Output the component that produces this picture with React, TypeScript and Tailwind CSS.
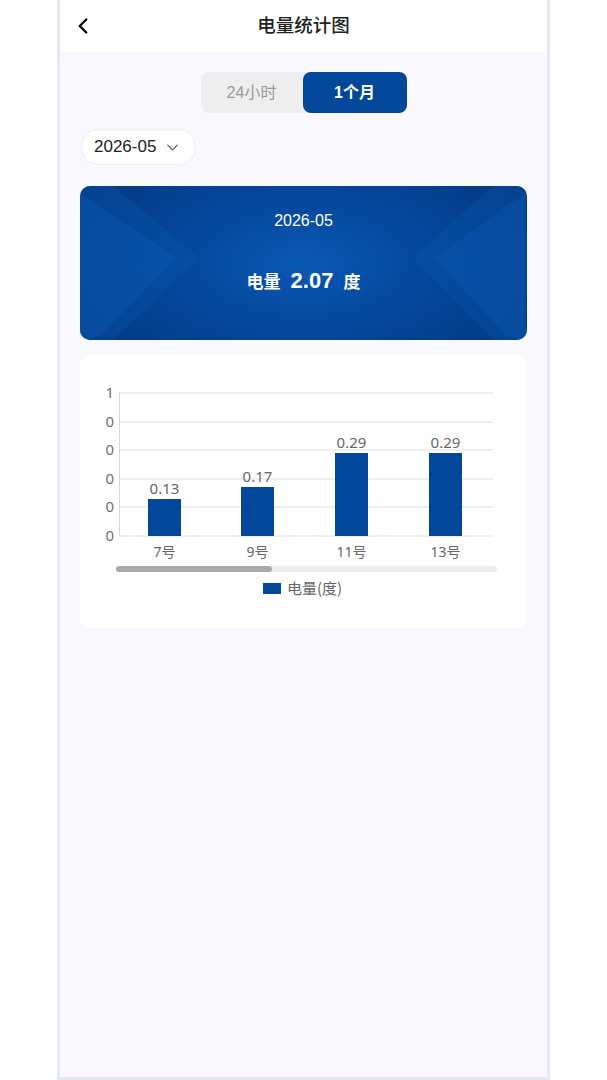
import { ChevronLeft, ChevronDown } from "lucide-react";

const bars = [
  { label: "7号", value: "0.13", x: 68, top: 144 },
  { label: "9号", value: "0.17", x: 161, top: 132 },
  { label: "11号", value: "0.29", x: 255, top: 98 },
  { label: "13号", value: "0.29", x: 349, top: 98 },
];

const grid = [38, 67, 95, 124, 152, 181];
const yLabels = ["1", "0", "0", "0", "0", "0"];

function Chart() {
  // coordinates relative to the card (card starts at x=80, y=355)
  return (
    <svg width="446" height="273" viewBox="0 0 446 273" className="block">
      {grid.map((y, i) => (
        <g key={i}>
          <line x1="39" x2="413" y1={y} y2={y} stroke="#e0e0e0" strokeWidth="1.2" />
          <text
            x="34"
            y={y + 5}
            textAnchor="end"
            fontSize="15"
            fill="#707070"
            fontFamily="'Noto Sans', 'Noto Sans CJK SC', sans-serif"
          >
            {yLabels[i]}
          </text>
        </g>
      ))}
      <line x1="39.5" x2="39.5" y1="38" y2="181" stroke="#d8d8d8" strokeWidth="1" />
      {bars.map((b) => (
        <g key={b.label}>
          <rect x={b.x} y={b.top} width="33" height={181 - b.top} fill="#03479b" />
          <text
            x={b.x + 16.5}
            y={b.top - 5}
            textAnchor="middle"
            fontSize="15"
            fill="#666"
            fontFamily="'Noto Sans', sans-serif"
          >
            {b.value}
          </text>
          <text
            x={b.x + 16.5}
            y="202"
            textAnchor="middle"
            fontSize="14"
            fill="#666"
            fontFamily="'Noto Sans', 'Noto Sans CJK SC', sans-serif"
          >
            {b.label}
          </text>
        </g>
      ))}
      <rect x="36" y="211" width="381" height="6" rx="3" fill="#ececec" />
      <rect x="36" y="211" width="156" height="6" rx="3" fill="#a9a9a9" />
      <rect x="183" y="228" width="18" height="11" fill="#03479b" />
      <text
        x="207"
        y="239"
        fontSize="15"
        fill="#666"
        fontFamily="'Noto Sans CJK SC', 'Noto Sans', sans-serif"
      >
        电量(度)
      </text>
    </svg>
  );
}

function Banner() {
  return (
    <div
      className="relative h-[154px] rounded-[10px] overflow-hidden text-white"
      style={{
        background:
          "radial-gradient(ellipse 55% 85% at 50% 50%, #0a58b4 0%, #04469a 55%, #033a82 100%)",
      }}
    >
      <svg
        className="absolute inset-0"
        width="446"
        height="154"
        viewBox="0 0 446 154"
        preserveAspectRatio="none"
      >
        <polygon points="0,0 33,0 120,72 33,154 0,154" fill="#0a55ad" opacity="0.35" />
        <polygon points="0,8 20,20 97,72 20,150 0,154" fill="#0c5cb8" opacity="0.35" />
        <polygon points="446,0 413,0 332,72 413,154 446,154" fill="#0a55ad" opacity="0.35" />
        <polygon points="446,8 426,20 355,72 426,150 446,154" fill="#0c5cb8" opacity="0.35" />
      </svg>
      <div className="relative flex flex-col items-center pt-[23px]">
        <div className="text-[16px] leading-[24px]">2026-05</div>
        <div className="mt-[31px] flex items-baseline gap-[10px] font-bold">
          <span className="text-[17px]">电量</span>
          <span className="text-[22px]">2.07</span>
          <span className="text-[17px]">度</span>
        </div>
      </div>
    </div>
  );
}

export default function App() {
  return (
    <div className="min-h-screen bg-white flex justify-center font-['Liberation_Sans','Noto_Sans_CJK_SC',sans-serif]">
      <div className="w-[493px] h-[1080px] border-x-[3px] border-b-[3px] border-[#e4e8ef] bg-[#f8f8fd] flex flex-col">
        <div className="relative h-[52px] bg-white flex items-center justify-center">
          <ChevronLeft
            className="absolute left-[10px] top-[13px] text-black"
            size={26}
            strokeWidth={2.2}
          />
          <div className="text-[18.5px] font-medium text-[#222]">电量统计图</div>
        </div>

        <div className="flex flex-col px-[20px]">
          <div className="mt-[20px] flex justify-center">
            <div className="flex h-[41px] w-[206px] rounded-[8px] bg-[#eeeeee]">
              <div className="flex-1 flex items-center justify-center text-[16px] text-[#9a9a9a]">
                24小时
              </div>
              <div className="w-[104px] flex items-center justify-center rounded-[8px] bg-[#03479b] text-[16px] font-bold text-white">
                1个月
              </div>
            </div>
          </div>

          <div className="mt-[16px] flex">
            <div className="ml-[1px] h-[36px] pl-[12px] pr-[13px] flex items-center gap-[7px] rounded-full bg-white border border-[#eeeeef] text-[17px] text-[#222]">
              <span>2026-05</span>
              <ChevronDown size={19} strokeWidth={1.5} className="text-[#555]" />
            </div>
          </div>

          <div className="mt-[21px]">
            <Banner />
          </div>

          <div className="mt-[15px] rounded-[10px] bg-white">
            <Chart />
          </div>
        </div>
      </div>
    </div>
  );
}
